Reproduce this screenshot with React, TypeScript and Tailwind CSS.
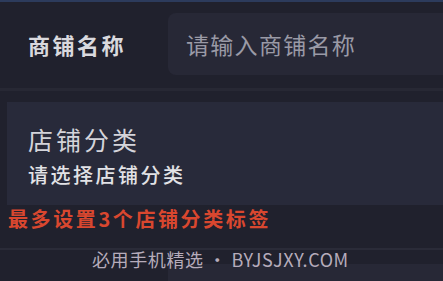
import React from "react";

export default function App() {
  return (
    <div
      className="relative w-[443px] h-[281px] overflow-hidden bg-[#20212d] flex flex-col"
      style={{ fontFamily: '"Noto Sans CJK SC", "Noto Sans", sans-serif' }}
    >
      <div className="h-[2px] bg-[#2c3b5c] shrink-0" />
      <div className="flex items-center mt-[11px] h-[62px] shrink-0">
        <div className="w-[168px] pl-[28px] text-[22px] leading-none font-bold tracking-[2.5px] text-[#d9d9de]">
          商铺名称
        </div>
        <div className="flex-1 h-full rounded-l-[8px] bg-[#272836] flex items-center pl-[18px] text-[23px] leading-none tracking-[1.3px] text-[#9a9aa6]">
          请输入商铺名称
        </div>
      </div>
      <div className="mt-[13px] h-[3px] bg-[#272834] shrink-0" />
      <div className="mt-[11px] ml-[7px] h-[103px] bg-[#282a3a] flex flex-col pl-[21px] shrink-0">
        <div className="mt-[25px] text-[25px] leading-none tracking-[3px] text-[#d4d4da]">
          店铺分类
        </div>
        <div className="mt-[13px] text-[20px] leading-none font-medium tracking-[2.5px] text-[#e2e2e6]">
          请选择店铺分类
        </div>
      </div>
      <div className="mt-[4px] pl-[8px] text-[20px] leading-none font-bold tracking-[2.6px] text-[#d9472f] shrink-0">
        最多设置3个店铺分类标签
      </div>
      <div className="mt-[19px] h-[2px] bg-[#2a2b38] shrink-0" />
      <div className="mt-[14px] flex flex-1">
        <div className="w-[168px]" />
        <div className="flex-1 bg-[#272836]" />
      </div>
      <div className="absolute left-[92px] top-[246px] flex">
        <span className="text-[18px] leading-[26px] tracking-[0.6px] text-[#b6acbb]">
          必用手机精选 • BYJSJXY.COM
        </span>
      </div>
    </div>
  );
}
